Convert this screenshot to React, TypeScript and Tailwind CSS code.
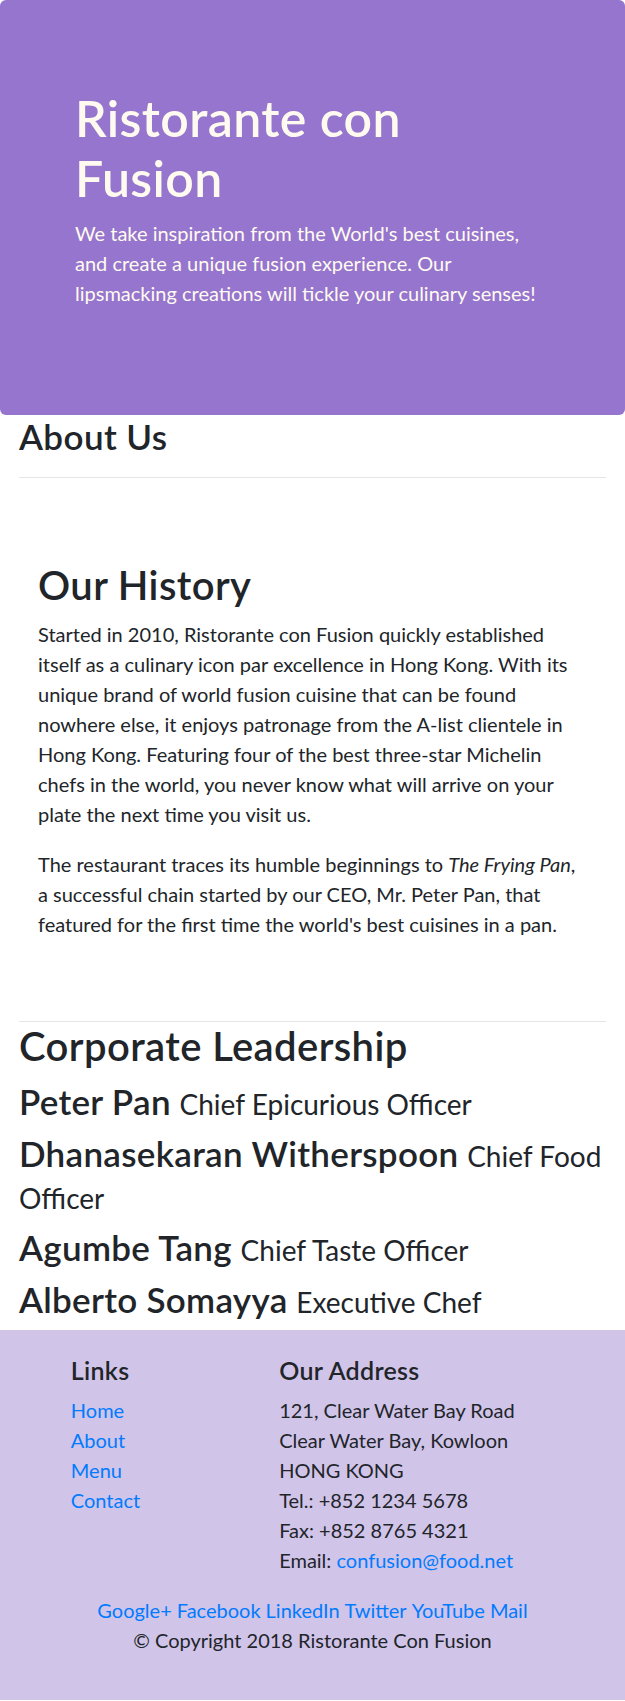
const leaders = [
  { name: "Peter Pan", designation: "Chief Epicurious Officer" },
  { name: "Dhanasekaran Witherspoon", designation: "Chief Food Officer" },
  { name: "Agumbe Tang", designation: "Chief Taste Officer" },
  { name: "Alberto Somayya", designation: "Executive Chef" },
];

const links = ["Home", "About", "Menu", "Contact"];
const socials = ["Google+", "Facebook", "LinkedIn", "Twitter", "YouTube", "Mail"];

function Header() {
  return (
    <header className="rounded-[6px] bg-[#9575cd] px-[75px] py-[87.5px] text-[#fffaf0]">
      <h1 className="mb-[10px] text-[50px] font-semibold leading-[60px] tracking-[0.4px]">
        Ristorante con Fusion
      </h1>
      <p className="mb-[20px] text-[20px] leading-[30px]">
        We take inspiration from the World's best cuisines, and create a unique
        fusion experience. Our lipsmacking creations will tickle your culinary
        senses!
      </p>
    </header>
  );
}

function Footer() {
  return (
    <footer className="bg-[#d1c4e9] py-[25px] text-[20px] leading-[30px] text-[#212529]">
      <div className="grid grid-cols-12">
        <div className="col-span-4 col-start-2 px-[18.75px]">
          <h5 className="mb-[10px] text-[25px] font-semibold leading-[30px] tracking-[0.3px]">Links</h5>
          <ul className="flex flex-col">
            {links.map((l) => (
              <li key={l}>
                <a href="#" className="text-[#007bff]">{l}</a>
              </li>
            ))}
          </ul>
        </div>
        <div className="col-span-7 px-[18.75px]">
          <h5 className="mb-[10px] text-[25px] font-semibold leading-[30px] tracking-[0.3px]">Our Address</h5>
          <address className="mb-[20px] flex flex-col not-italic">
            <span>121, Clear Water Bay Road</span>
            <span>Clear Water Bay, Kowloon</span>
            <span>HONG KONG</span>
            <span>Tel.: +852 1234 5678</span>
            <span>Fax: +852 8765 4321</span>
            <span>
              Email: <a href="#" className="text-[#007bff]">confusion@food.net</a>
            </span>
          </address>
        </div>
        <div className="col-span-12 flex justify-center gap-[5px] px-[18.75px]">
          {socials.map((s) => (
            <a key={s} href="#" className="text-[#007bff]">{s}</a>
          ))}
        </div>
      </div>
      <p className="mb-[20px] text-center">© Copyright 2018 Ristorante Con Fusion</p>
    </footer>
  );
}

export default function App() {
  return (
    <div className="bg-white font-['Lato',sans-serif] text-[#212529]">
      <Header />
      <main className="px-[19px]">
        <h3 className="text-[35px] font-semibold leading-[42px] tracking-[0.4px]">About Us</h3>
        <hr className="mb-[20px] mt-[20px] border-t border-black/10" />

        <section className="border-b border-black/10 px-[19px] py-[62.5px]">
          <h2 className="mb-[10px] text-[40px] font-semibold leading-[48px] tracking-[0.4px]">Our History</h2>
          <div className="flex flex-col gap-[20px] text-[20px] leading-[30px]">
            <p>
              Started in 2010, Ristorante con Fusion quickly established itself
              as a culinary icon par excellence in Hong Kong. With its unique
              brand of world fusion cuisine that can be found nowhere else, it
              enjoys patronage from the A-list clientele in Hong Kong. Featuring
              four of the best three-star Michelin chefs in the world, you never
              know what will arrive on your plate the next time you visit us.
            </p>
            <p className="mb-[20px]">
              The restaurant traces its humble beginnings to <em>The Frying Pan</em>,
              a successful chain started by our CEO, Mr. Peter Pan, that featured
              for the first time the world's best cuisines in a pan.
            </p>
          </div>
        </section>

        <section>
          <h2 className="mb-[10px] text-[40px] font-semibold leading-[48px] tracking-[0.4px]">
            Corporate Leadership
          </h2>
          <div className="flex flex-col gap-[10px] pb-[10px]">
            {leaders.map((l) => (
              <h3 key={l.name} className="text-[35px] font-semibold leading-[42px]">
                <span className="tracking-[0.3px]">{l.name}</span>{" "}
                <small className="text-[28px] font-normal leading-none">{l.designation}</small>
              </h3>
            ))}
          </div>
        </section>
      </main>
      <Footer />
    </div>
  );
}
